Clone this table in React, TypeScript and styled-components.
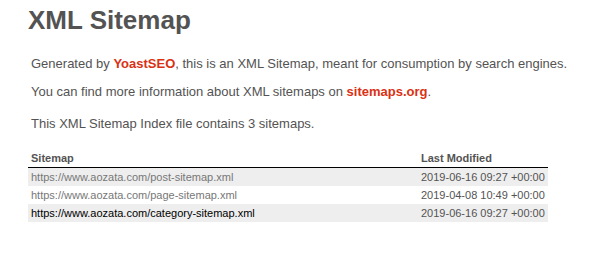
import React, { FC } from 'react';
import styled, { createGlobalStyle } from 'styled-components';

interface SitemapEntry {
  url: string;
  lastmod: string;
  visited: boolean;
}

const sitemaps: SitemapEntry[] = [
  { url: 'https://www.aozata.com/post-sitemap.xml', lastmod: '2019-06-16 09:27 +00:00', visited: true },
  { url: 'https://www.aozata.com/page-sitemap.xml', lastmod: '2019-04-08 10:49 +00:00', visited: true },
  { url: 'https://www.aozata.com/category-sitemap.xml', lastmod: '2019-06-16 09:27 +00:00', visited: false },
];

const GlobalStyle = createGlobalStyle`
  body {
    margin: 0;
    background: #fff;
    font-family: Helvetica, 'Liberation Sans', Arial, sans-serif;
    font-size: 13px;
    color: #545353;
  }
`;

const Content = styled.div`
  width: 560px;
  margin-left: 28px;
  padding-top: 5px;
`;

const Title = styled.h1`
  margin: 0;
  font-size: 26px;
  line-height: 30px;
  font-weight: bold;
  color: #545353;
`;

const Explanation = styled.p<{ $top: number }>`
  margin: ${(props) => props.$top}px 3px 0;
  line-height: 16px;
  white-space: nowrap;
`;

const RedLink = styled.a`
  color: #da3114;
  font-weight: 600;
  text-decoration: none;
`;

const Table = styled.table`
  width: 520px;
  margin-top: 18px;
  border: none;
  border-collapse: collapse;
  font-size: 11px;
`;

const HeadCell = styled.th<{ $width?: number }>`
  text-align: left;
  padding: 0 0 1px 3px;
  line-height: 16px;
  font-weight: bold;
  white-space: nowrap;
  border-bottom: 1px solid #000;
  width: ${(props) => (props.$width ? `${props.$width}px` : 'auto')};
`;

const Row = styled.tr`
  &:nth-child(odd) td {
    background-color: #eee;
  }
`;

const Cell = styled.td`
  padding: 1px 0 1px 3px;
  line-height: 16px;
  white-space: nowrap;
`;

const UrlLink = styled.a<{ $visited: boolean }>`
  color: ${(props) => (props.$visited ? '#777' : '#000')};
  text-decoration: none;
`;

const App: FC = () => (
  <>
    <GlobalStyle />
    <Content>
      <Title>XML Sitemap</Title>
      <Explanation $top={21}>
        Generated by <RedLink href="#">YoastSEO</RedLink>, this is an XML Sitemap, meant for consumption by search
        engines.
      </Explanation>
      <Explanation $top={12}>
        You can find more information about XML sitemaps on <RedLink href="#">sitemaps.org</RedLink>.
      </Explanation>
      <Explanation $top={16}>This XML Sitemap Index file contains 3 sitemaps.</Explanation>
      <Table>
        <thead>
          <tr>
            <HeadCell $width={387}>Sitemap</HeadCell>
            <HeadCell>Last Modified</HeadCell>
          </tr>
        </thead>
        <tbody>
          {sitemaps.map((v) => (
            <Row key={v.url}>
              <Cell>
                <UrlLink href="#" $visited={v.visited}>
                  {v.url}
                </UrlLink>
              </Cell>
              <Cell>{v.lastmod}</Cell>
            </Row>
          ))}
        </tbody>
      </Table>
    </Content>
  </>
);

export default App;
